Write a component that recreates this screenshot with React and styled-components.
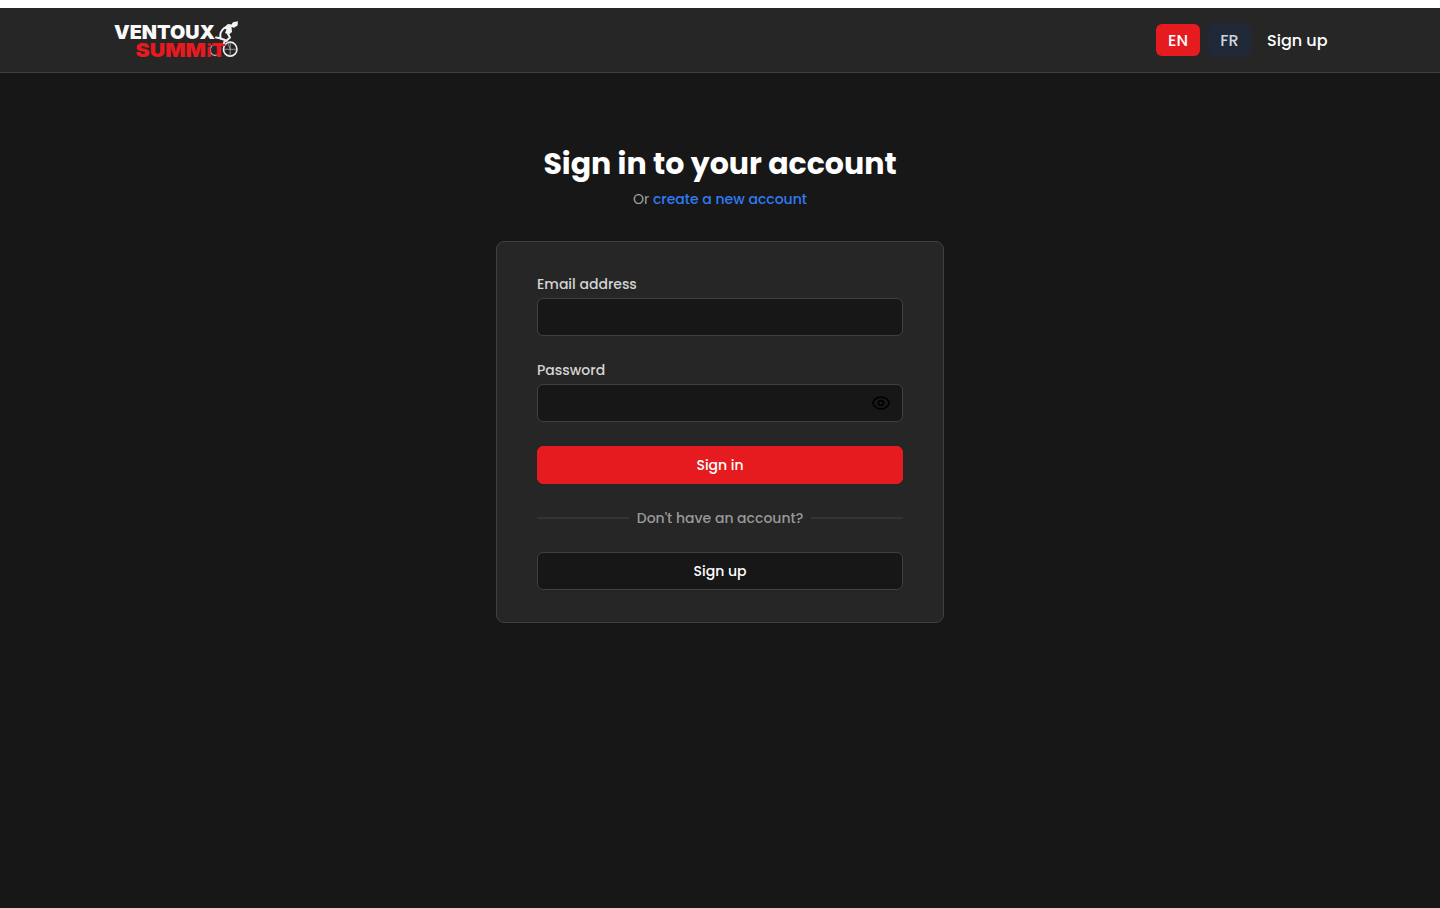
import React from "react";
import styled, { createGlobalStyle } from "styled-components";
import { Eye } from "lucide-react";

const GlobalStyle = createGlobalStyle`
  *, *::before, *::after { box-sizing: border-box; }
  body {
    margin: 0;
    background: #fff;
    font-family: Poppins, Inter, "Open Sans", sans-serif;
    -webkit-font-smoothing: antialiased;
  }
  h1, p, form { margin: 0; }
  button, input { font: inherit; }
  a { text-decoration: none; }
`;

const Page = styled.div`
  margin-top: 8px;
  height: 900px;
  background: #171717;
  overflow: hidden;
`;

const Header = styled.header`
  height: 65px;
  background: #262626;
  border-bottom: 1px solid #404040;
`;

const HeaderInner = styled.div`
  max-width: 1216px;
  height: 64px;
  margin: 0 auto;
  display: flex;
  align-items: center;
  justify-content: space-between;
`;

const LogoSvg = styled.svg`
  display: block;
  width: 128px;
  height: 40px;
  overflow: visible;
`;

const Nav = styled.nav`
  display: flex;
  align-items: center;
  gap: 8px;
`;

const LangButton = styled.button`
  width: ${(p) => (p.$active ? 44 : 43)}px;
  height: 32px;
  padding: 1px 0 0;
  border: 0;
  border-radius: 6px;
  font-size: 16px;
  font-weight: 500;
  line-height: 24px;
  color: ${(p) => (p.$active ? "#fff" : "#d1d5db")};
  background: ${(p) => (p.$active ? "#e51b20" : "#1f2937")};
`;

const NavLink = styled.a`
  width: 61px;
  margin-left: 8px;
  padding-top: 1px;
  font-size: 16px;
  font-weight: 500;
  line-height: 24px;
  white-space: nowrap;
  color: #fff;
`;

const Main = styled.main`
  width: 448px;
  margin: 0 auto;
  padding-top: 73px;
`;

const Title = styled.h1`
  font-size: 30px;
  line-height: 36px;
  font-weight: 700;
  text-align: center;
  white-space: nowrap;
  color: #fff;
`;

const Subtitle = styled.p`
  margin-top: 7px;
  font-size: 14px;
  line-height: 20px;
  text-align: center;
  color: #a3a3a3;
`;

const AccountLink = styled.a`
  font-weight: 500;
  color: #2f7cf6;
`;

const Card = styled.form`
  margin-top: 32px;
  padding: 32px 40px;
  display: flex;
  flex-direction: column;
  gap: 24px;
  background: #262626;
  border: 1px solid #404040;
  border-radius: 8px;
`;

const Label = styled.label`
  display: block;
  font-size: 14px;
  line-height: 20px;
  font-weight: 500;
  color: #d4d4d4;
`;

const InputBox = styled.div`
  margin-top: 4px;
  height: 38px;
  padding-right: 11px;
  display: flex;
  align-items: center;
  background: #171717;
  border: 1px solid #404040;
  border-radius: 6px;
`;

const Input = styled.input`
  flex: 1;
  min-width: 0;
  height: 100%;
  padding: 0 12px;
  border: 0;
  outline: 0;
  background: transparent;
  color: #fff;
`;

const EyeButton = styled.button`
  display: flex;
  padding: 0;
  border: 0;
  background: transparent;
  color: #000;
`;

const ActionButton = styled.button`
  height: 38px;
  padding: 0;
  font-size: 14px;
  line-height: 20px;
  font-weight: 500;
  color: #fff;
  background: ${(p) => (p.$primary ? "#e51b20" : "#171717")};
  border: 1px solid ${(p) => (p.$primary ? "#e51b20" : "#404040")};
  border-radius: 6px;
  box-shadow: 0 1px 2px rgba(0, 0, 0, 0.05);
`;

const Divider = styled.div`
  display: flex;
  align-items: center;
  gap: 8px;
  height: 20px;
`;

const Line = styled.span`
  flex: 1;
  height: 2px;
  background: #333;
`;

const DividerText = styled.span`
  font-size: 14px;
  line-height: 20px;
  font-weight: 500;
  white-space: nowrap;
  color: #999;
`;

function Logo() {
  return (
    <LogoSvg viewBox="112 20 128 40" role="img" aria-label="Ventoux Summit">
      <g fill="none" stroke="#eee" strokeLinecap="round" strokeLinejoin="round">
        <ellipse cx="215" cy="50" rx="4.800" ry="5.500" strokeWidth="1.300" stroke="#b9a9a9" />
        <ellipse cx="230.200" cy="49.200" rx="6.700" ry="7" strokeWidth="1.700" />
        <path d="M230.200 49.200 226.500 40M230.200 43v12.500M224.500 49.300h11.500" strokeWidth=".8" stroke="#aaa" />
      </g>
      <g fontFamily="Inter, sans-serif" fontWeight="900" fontSize="19.200">
        <text x="114" y="38.500" fill="#fafafa" textLength="101" lengthAdjust="spacingAndGlyphs">VENTOUX</text>
        <text x="135.500" y="57.300" fill="#e8191f" textLength="70.500" lengthAdjust="spacingAndGlyphs">SUMM</text>
        <text x="206.500" y="57.300" fill="#d41a1f" fontSize="17" textLength="5" lengthAdjust="spacingAndGlyphs">i</text>
        <text x="211.500" y="57.300" fill="#e8191f" textLength="14.500" lengthAdjust="spacingAndGlyphs">T</text>
      </g>
      <g fill="none" stroke="#f2f2f2" strokeLinecap="round" strokeLinejoin="round">
        <path d="m216 37.500 4.500.8c-.8-4 0-7.500 4-10.500" strokeWidth="2" />
        <path d="m220.500 38.500 4.500 1.500-1 3" strokeWidth="2" />
        <path d="m227.500 33 2.500 4.500-4 3.500" strokeWidth="2" />
      </g>
      <path d="M222.500 31 225 26.500 228 24l3.500.5 1.500-2.300 4.900-.9-.3 4.200-3.600 2.200-2.500-.7.5 5-3 2.500-4-1.500 1.500-3.500-2-1z" fill="#f4f4f4" />
    </LogoSvg>
  );
}

export default function App() {
  return (
    <>
      <GlobalStyle />
      <Page>
        <Header>
          <HeaderInner>
            <Logo />
            <Nav>
              <LangButton $active>EN</LangButton>
              <LangButton>FR</LangButton>
              <NavLink>Sign up</NavLink>
            </Nav>
          </HeaderInner>
        </Header>
        <Main>
          <Title>Sign in to your account</Title>
          <Subtitle>
            Or <AccountLink>create a new account</AccountLink>
          </Subtitle>
          <Card onSubmit={(e) => e.preventDefault()}>
            <div>
              <Label htmlFor="email">Email address</Label>
              <InputBox>
                <Input id="email" type="email" />
              </InputBox>
            </div>
            <div>
              <Label htmlFor="password">Password</Label>
              <InputBox>
                <Input id="password" type="password" />
                <EyeButton type="button" aria-label="Show password">
                  <Eye size={20} strokeWidth={2} />
                </EyeButton>
              </InputBox>
            </div>
            <ActionButton $primary type="submit">Sign in</ActionButton>
            <Divider>
              <Line />
              <DividerText>Don't have an account?</DividerText>
              <Line />
            </Divider>
            <ActionButton type="button">Sign up</ActionButton>
          </Card>
        </Main>
      </Page>
    </>
  );
}
